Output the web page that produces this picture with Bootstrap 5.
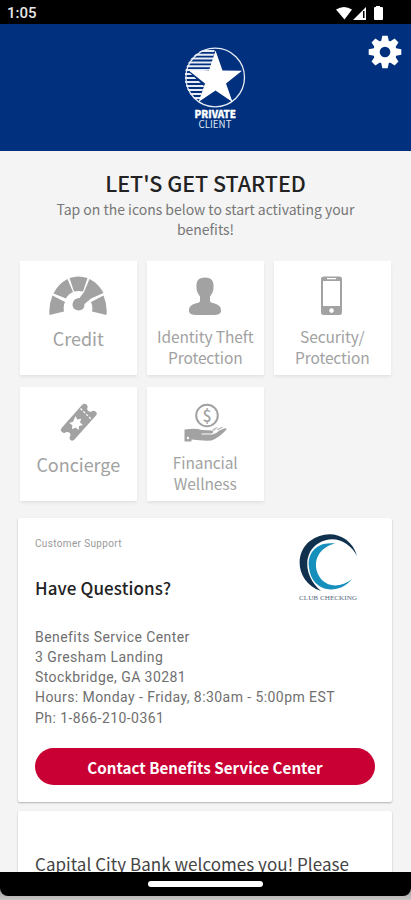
<!DOCTYPE html>
<html lang="en">
<head>
<meta charset="utf-8">
<meta name="viewport" content="width=device-width, initial-scale=1">
<title>Private Client Benefits</title>
<link href="https://cdn.jsdelivr.net/npm/bootstrap@5.3.0/dist/css/bootstrap.min.css" rel="stylesheet">
<style>
body{background:#c4c4c4;font-family:"Noto Sans CJK SC","Noto Sans",sans-serif}
.phone{height:900px;background:linear-gradient(#777,#c8c8c8) bottom/100% 20px no-repeat}
.status-bar{height:24px;background:#000;color:#e8e8e8;font:500 15px/24px Roboto,sans-serif;padding:1px 27px 0 7px}
.brand-bar{height:127px;background:#01317e;padding:21px 0 0 19px}
.gear{position:absolute;right:9px;top:11px}
.screen{background:#f4f4f4}
.headline{font-size:21.5px;line-height:24px;letter-spacing:-.02px;color:#222;padding-top:20px;font-weight:500}
.intro{font-size:14px;line-height:20px;color:#777;padding:0 45px;letter-spacing:-.02px;margin:4px 0 21.5px}
.tiles{display:grid;grid-template-columns:repeat(3,116.500px);column-gap:10.500px;row-gap:12px;margin-left:20px}
.tile{height:114px;background:#fff;box-shadow:0 2px 3px rgba(0,0,0,.07);padding-top:15px;color:#a2a2a2;font-size:15.5px;line-height:21px;letter-spacing:-.1px}
.tile svg{margin-bottom:10px;fill:#a2a2a2}
.tile-large{font-size:18px;line-height:24px;letter-spacing:-.05px}
.panel{background:#fff;margin:0 19px 0 18px;padding:0 17px;border-radius:2px;box-shadow:0 1px 2px rgba(0,0,0,.28)}
.support{height:284px;margin-top:17px}
.kicker{font:10px/14px Roboto,sans-serif;color:#999;padding-top:19px;letter-spacing:.35px}
.question{font-size:17px;line-height:24px;color:#222;margin-top:25px;letter-spacing:.1px;font-weight:500}
.address{font:14px/20.3px Roboto,sans-serif;color:#6f6f6f;margin-top:23px;letter-spacing:.43px}
.cta{height:37px;background:#c90034;color:#fff;font-size:15.2px;line-height:38px;font-weight:700;margin-top:20.5px;padding:0}
.cta:hover{background:#b4002f;color:#fff}
.welcome{margin-top:9px;padding-top:40px;height:80px;font-size:17px;line-height:26px;color:#444;white-space:nowrap;letter-spacing:.04px}
.nav-area{background:#000;height:24px;border-radius:0 0 8px 8px;padding-top:9px}
.pill{width:115px;height:6px;background:#fff}
</style>
</head>
<body>
<div class="phone d-flex flex-column overflow-hidden">
  <div class="status-bar d-flex justify-content-between align-items-center flex-shrink-0">
    <span>1:05</span>
    <svg width="48" height="14" viewBox="336 5 48 14" fill="#fff"><path d="M336 8.500q8-5 16 0L344.500 18.500z"/><path fill-rule="evenodd" d="M366 6v13h-13zM363 10v7h1.500v-7z"/><path d="M375 6h1v-1h4v1h2q1 0 1 1v11q0 1-1 1h-7q-1 0-1-1V7q0-1 1-1z"/></svg>
  </div>
  <main class="screen flex-grow-1 overflow-hidden">
    <header class="brand-bar position-relative text-center">
      <svg class="d-block mx-auto" width="70" height="86" viewBox="180 45 70 86">
        <defs><clipPath id="leftside"><path d="M215 48a29 29 0 0 0-16 54L204 86 190 73 211 70z"/></clipPath></defs>
        <circle cx="215.200" cy="77.500" r="29.300" fill="none" stroke="#e9edf6" stroke-width="1.300"/>
        <path clip-path="url(#leftside)" stroke="#e6ebf5" stroke-width="2" d="M185 51h31M185 54.800h31M185 58.600h31M185 62.400h31M185 66.200h31M185 70h31M185 74h31M185 78h31M185 82h31M185 86h31M185 90h31M185 94h31M185 98h31"/>
        <path fill="#fff" d="M215.500 50.500l7 20 19.500.2-16 12.800 6.500 18.500-17-11.500-17 11.500 6.500-18.500-16-12.800 20-.2z"/>
        <text x="194.500" y="118" textLength="41.500" lengthAdjust="spacingAndGlyphs" font-size="10" font-weight="900" fill="#fff" stroke="#fff" stroke-width=".3" font-family="Noto Sans CJK SC,sans-serif">PRIVATE</text>
        <text x="198.500" y="127.800" textLength="33" lengthAdjust="spacingAndGlyphs" font-size="10.500" fill="#dce3f1" font-family="Noto Sans CJK SC,sans-serif">CLIENT</text>
      </svg>
      <svg class="gear" width="34" height="34" viewBox="-17 -17 34 34">
        <g fill="#fff"><g id="teeth"><path id="tooth" d="M-3.800-11L-2.700-16.300H2.700L3.800-11V11L2.700 16.300H-2.700L-3.800 11z"/><use href="#tooth" transform="rotate(90)"/></g><use href="#teeth" transform="rotate(45)"/><circle r="11.800"/></g><circle r="5.300" fill="#01317e"/>
      </svg>
    </header>
    <h1 class="headline text-center m-0">LET'S GET STARTED</h1>
    <p class="intro text-center">Tap on the icons below to start activating your benefits!</p>
    <section class="tiles text-center">
      <div class="tile tile-large">
        <svg class="d-block mx-auto" width="60" height="40" viewBox="48 276 60 40"><path d="M49.500 315q-1-10 3-19.500L65 302q-2 4-1 9.500zM53.500 293.500Q58 284 67.500 279L73 292q-5 2-7 6.500zM69.500 278q9-3 18 0L83 291.500q-4-1-9 0zM106.500 315q1-10-3-19.500L91 302q2 4 1 9.500z"/><path d="M89.500 279q9 4.500 14 14L91 298.500 84.500 304q0 6.500-6 6.500-6.500-1-6-6.500 1-6 7-6l4.500-6z"/></svg>
        Credit</div>
      <div class="tile">
        <svg class="d-block mx-auto" width="60" height="40" viewBox="175 276 60 40"><path d="M205 277.500c7 0 9 4 8.500 10 0 4-1.500 6-3.500 9v4q0 2 3 2.500c7 2 8 4 8 8.500-1 4-6 3.500-16 3.500s-15 .5-16-3.500c0-4.500 1-6.500 8-8.500q3-.5 3-2.500v-4c-2-3-3.500-5-3.500-9-.5-6 1.500-10 8.500-10z"/></svg>
        Identity Theft<br>Protection</div>
      <div class="tile">
        <svg class="d-block mx-auto" width="60" height="40" viewBox="302 276 60 40"><path fill-rule="evenodd" d="M323.500 276.500h16q2.500 0 2.500 2.500v33q0 3-2.500 3h-16q-2.500 0-2.500-3v-33q0-2.500 2.500-2.500zM323 281v25h17v-25zM327 278v1.300h9V278zM331.500 308.300a2.300 2.300 0 1 0 .1 0z"/></svg>
        Security/<br>Protection</div>
      <div class="tile tile-large">
        <svg class="d-block mx-auto" width="60" height="40" viewBox="48 402 60 40"><path d="M82 405q3-2.500 5 0 1.500 2 0 4 1 3.500 4.500 2.500 3-2 5 1 1 1.500-.5 3L74 440q-2 1.500-3.500 0-2-2 0-4.500 0-4-4-3.500-3 2-5-.5-1.500-2 .5-4z"/><path d="M75.500 416l1.700 3.500 4-.8-1.200 3.800 3 2.500-3.900 1-.5 4-3.100-2.500-3.600 1.700.5-4-3.300-2.200 3.900-1.200z" fill="#fff"/><path d="M80.500 408.500l12.500 12.500" stroke="#fff" stroke-width="1.200" stroke-dasharray="2.500 1.500"/></svg>
        Concierge</div>
      <div class="tile">
        <svg class="d-block mx-auto" width="60" height="40" viewBox="175 402 60 40"><circle cx="207" cy="415.500" r="10.800" fill="none" stroke="#a2a2a2" stroke-width="2"/><text x="207" y="421.600" text-anchor="middle" font-size="16" font-weight="500" font-family="Noto Sans CJK SC,sans-serif">$</text><path d="M184.500 429.500q12-1.500 17 .5l11 .5q2 2-1 3h-10v1h11q4-1 7-4l4.500-2q3-1 2.500 1-7 8-15 11-9 .5-20-1v2h-7z"/><path d="M212 430q3-3.500 6-2.500l-4 3.500zM217 429l4-2q2-.5 2 .5l-5 3z" fill="#c3c3c3"/><circle cx="188" cy="438" r="1.200" fill="#fff"/></svg>
        Financial<br>Wellness</div>
    </section>
    <section class="panel support">
      <div class="d-flex justify-content-between">
        <div><div class="kicker">Customer Support</div>
        <h2 class="question mb-0">Have Questions?</h2></div>
        <svg class="flex-shrink-0 mt-3 me-3" width="62" height="70" viewBox="297 534 62 70"><path d="M357 556C351 534 327 528 310 541 293 554 297 583 321 591 303 576 303 552 319 543 334 534 350 542 357 556z" fill="#10314d"/><path d="M335 543.500C317 541 307 553 309 567c2 24 28 30 43 12-11 9-26 9-33-3-8-15 1-29 16-32.500z" fill="#168fbd"/><text x="299" y="599.500" textLength="58" lengthAdjust="spacingAndGlyphs" font-size="6.500" fill="#52697c" font-family="Liberation Serif,serif">CLUB CHECKING</text></svg>
      </div>
      <address class="address mb-0">Benefits Service Center<br>3 Gresham Landing<br>Stockbridge, GA 30281<br>Hours: Monday - Friday, 8:30am - 5:00pm EST<br>Ph: 1-866-210-0361</address>
      <a class="btn cta rounded-pill d-block border-0" href="#">Contact Benefits Service Center</a>
    </section>
    <section class="panel welcome">Capital City Bank welcomes you! Please</section>
  </main>
  <div class="nav-area flex-shrink-0"><div class="pill rounded-pill mx-auto"></div></div>
  <div class="flex-shrink-0 pt-1"></div>
</div>
<script src="https://cdn.jsdelivr.net/npm/bootstrap@5.3.0/dist/js/bootstrap.bundle.min.js"></script>
</body>
</html>
